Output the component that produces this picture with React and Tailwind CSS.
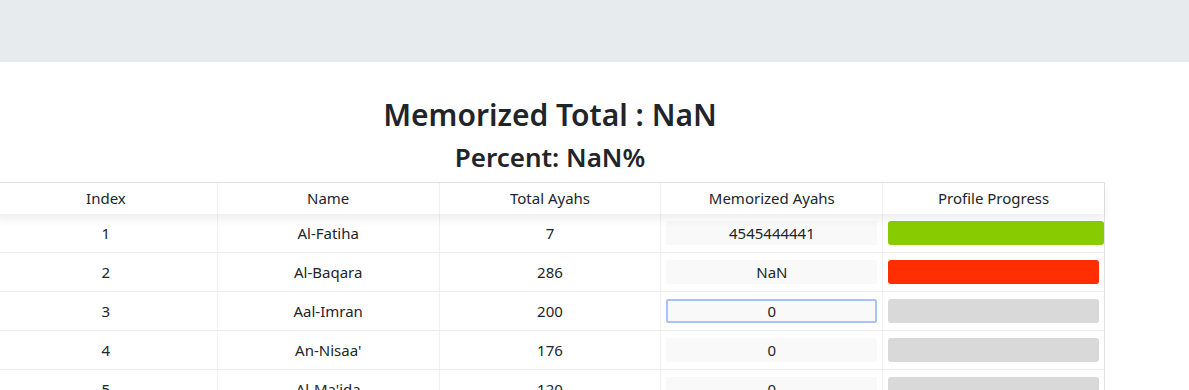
import React from 'react';

const surahs = [
  { index: 1, name: 'Al-Fatiha', total: 7, memorized: '4545444441', bar: 'bg-[#88cc00] w-[216px]' },
  { index: 2, name: 'Al-Baqara', total: 286, memorized: 'NaN', bar: 'bg-[#ff2e00] w-[211px]' },
  { index: 3, name: 'Aal-Imran', total: 200, memorized: '0', bar: 'bg-[#d9d9d9] w-[211px]', focused: true },
  { index: 4, name: "An-Nisaa'", total: 176, memorized: '0', bar: 'bg-[#d9d9d9] w-[211px]' },
  { index: 5, name: "Al-Ma'ida", total: 120, memorized: '0', bar: 'bg-[#d9d9d9] w-[211px]' },
];

const headers = ['Index', 'Name', 'Total Ayahs', 'Memorized Ayahs', 'Profile Progress'];

function App() {
  return (
    <div className="min-h-screen bg-white text-[#212529] font-['Segoe_UI','Noto_Sans',sans-serif]">
      {/* Top bar */}
      <div className="h-[62px] bg-[#e8ebee]" />

      <div className="ml-[-5px] w-[1110px]">
        {/* Totals */}
        <div className="text-center pt-[33px]">
          <h2 className="text-[30px] font-semibold leading-[40px]">Memorized Total : NaN</h2>
          <h3 className="text-[26px] font-semibold leading-[36px] mt-[4px]">Percent: NaN%</h3>
        </div>

        {/* Table */}
        <div className="mt-[7px] border-r border-[#e2e2e2] text-[15px]">
          <div className="relative z-10 grid grid-cols-5 h-[32px] border-t border-[#e2e2e2] bg-white shadow-[0_5px_10px_rgba(0,0,0,0.07)]">
            {headers.map((h, i) => (
              <div
                key={h}
                className={`flex items-center justify-center ${i > 0 ? 'border-l border-[#f0f0f0]' : ''}`}
              >
                {h}
              </div>
            ))}
          </div>

          {surahs.map((s) => (
            <div key={s.index} className="grid grid-cols-5 h-[39px] border-b border-[#ececec]">
              <div className="flex items-center justify-center">{s.index}</div>
              <div className="flex items-center justify-center border-l border-[#f0f0f0]">{s.name}</div>
              <div className="flex items-center justify-center border-l border-[#f0f0f0]">{s.total}</div>
              <div className="flex items-center border-l border-[#f0f0f0] px-[5px]">
                <input
                  readOnly
                  value={s.memorized}
                  className={`w-[211px] h-[24px] rounded-[2px] bg-[#f9f9f9] text-center outline-none ${
                    s.focused ? 'border-2 border-[#a6c3fb]' : 'border-0'
                  }`}
                />
              </div>
              <div className="flex items-center border-l border-[#f0f0f0] pl-[5px]">
                <div className={`h-[24px] rounded-[3px] ${s.bar}`} />
              </div>
            </div>
          ))}
        </div>
      </div>
    </div>
  );
}

export default App;
